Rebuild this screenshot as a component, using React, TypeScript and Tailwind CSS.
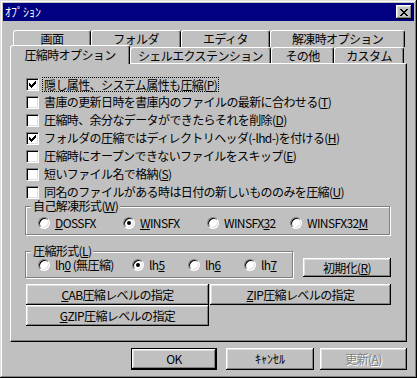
import React from "react";

const raised =
  "bg-[#c0c0c0] shadow-[inset_-1px_-1px_0_#000,inset_1px_1px_0_#fff,inset_-2px_-2px_0_#808080,inset_2px_2px_0_#dfdfdf]";

const U = ({ children }: { children: React.ReactNode }) => (
  <span className="underline underline-offset-[1px] decoration-1">{children}</span>
);

const CheckMark = () => (
  <svg width="7" height="7" viewBox="0 0 7 7" shapeRendering="crispEdges">
    <rect x="6" y="0" width="1" height="1" fill="#000" />
    <rect x="5" y="1" width="2" height="1" fill="#000" />
    <rect x="0" y="2" width="1" height="1" fill="#000" />
    <rect x="4" y="2" width="3" height="1" fill="#000" />
    <rect x="0" y="3" width="2" height="1" fill="#000" />
    <rect x="3" y="3" width="3" height="1" fill="#000" />
    <rect x="0" y="4" width="5" height="1" fill="#000" />
    <rect x="1" y="5" width="3" height="1" fill="#000" />
    <rect x="2" y="6" width="1" height="1" fill="#000" />
  </svg>
);

interface CheckRowProps {
  label: string;
  mn: string;
  checked?: boolean;
  focus?: boolean;
}

const CheckRow = ({ label, mn, checked, focus }: CheckRowProps) => (
  <div className="flex items-center h-[18px] ml-[1px]">
    <div className="w-[13px] h-[13px] shrink-0 bg-white border border-t-[#808080] border-l-[#808080] border-b-white border-r-white shadow-[inset_1px_1px_0_#000,inset_-1px_-1px_0_#dfdfdf] flex items-center justify-center">
      {checked && <CheckMark />}
    </div>
    <span
      className={
        focus
          ? "ml-[4px] px-[1px] leading-[13px] outline-1 outline-dotted outline-black whitespace-nowrap"
          : "ml-[5px] whitespace-nowrap"
      }
    >
      {label}(<U>{mn}</U>)
    </span>
  </div>
);

const Radio = ({ checked, children, className }: { checked?: boolean; children: React.ReactNode; className?: string }) => (
  <div className={"flex items-center gap-[5px] " + (className ?? "")}>
    <div className="w-[12px] h-[12px] shrink-0 rounded-full bg-white border border-t-[#808080] border-l-[#808080] border-b-white border-r-white shadow-[inset_1px_1px_0_#000,inset_-1px_-1px_0_#dfdfdf] flex items-center justify-center">
      {checked && <div className="w-[4px] h-[4px] rounded-full bg-black" />}
    </div>
    <span className="whitespace-nowrap leading-[12px]">{children}</span>
  </div>
);

const Tab = ({ label, className, selected }: { label: string; className: string; selected?: boolean }) => (
  <div
    className={
      "flex items-center justify-center bg-[#c0c0c0] border-t border-l border-r border-t-white border-l-white border-r-black rounded-t-[3px] shadow-[inset_-1px_0_0_#808080] whitespace-nowrap " +
      className +
      (selected ? " relative z-10 h-[19px] -mt-[2px] -mb-[1px] pb-[1px]" : "")
    }
  >
    {label}
  </div>
);

const checks: CheckRowProps[] = [
  { label: "隠し属性、システム属性も圧縮", mn: "P", checked: true, focus: true },
  { label: "書庫の更新日時を書庫内のファイルの最新に合わせる", mn: "T" },
  { label: "圧縮時、余分なデータができたらそれを削除", mn: "D" },
  { label: "フォルダの圧縮ではディレクトリヘッダ(-lhd-)を付ける", mn: "H", checked: true },
  { label: "圧縮時にオープンできないファイルをスキップ", mn: "E" },
  { label: "短いファイル名で格納", mn: "S" },
  { label: "同名のファイルがある時は日付の新しいもののみを圧縮", mn: "U" },
];

const groupBox =
  "border border-[#808080] shadow-[1px_1px_0_#fff,inset_1px_1px_0_#fff] p-0 m-0";

export default function App() {
  return (
    <div className="w-[417px] h-[378px] bg-[#c0c0c0] p-[3px] flex flex-col text-[12px] leading-[14px] tracking-[-0.6px] text-black font-['Noto_Sans_CJK_JP','Noto_Sans',sans-serif] shadow-[inset_-1px_-1px_0_#000,inset_1px_1px_0_#dfdfdf,inset_-2px_-2px_0_#808080,inset_2px_2px_0_#fff] overflow-hidden">
      {/* title bar */}
      <div className="h-[18px] bg-[#000080] flex items-center justify-between pl-[2px] pr-[2px]">
        <span className="text-white tracking-normal">ｵﾌﾟｼｮﾝ</span>
        <div className={"w-[16px] h-[14px] flex items-center justify-center " + raised}>
          <svg width="8" height="7" viewBox="0 0 8 7" shapeRendering="crispEdges">
            <path d="M0 0h2v1h1v1h2v-1h1v-1h2v1h-1v1h-1v1h-1v1h1v1h1v1h1v1h-2v-1h-1v-1h-2v1h-1v1h-2v-1h1v-1h1v-1h1v-1h-1v-1h-1v-1h-1z" fill="#000" />
          </svg>
        </div>
      </div>

      <div className="pl-[7px] pt-[9px] flex flex-col">
        {/* back row of tabs */}
        <div className="flex h-[17px] pl-[3px]">
          <Tab label="画面" className="w-[78px]" />
          <Tab label="フォルダ" className="w-[90px]" />
          <Tab label="エディタ" className="w-[89px]" />
          <Tab label="解凍時オプション" className="w-[135px]" />
        </div>
        {/* front row of tabs */}
        <div className="flex h-[16px] items-end">
          <Tab label="圧縮時オプション" className="w-[120px]" selected />
          <Tab label="シェルエクステンション" className="w-[141px] h-[16px]" />
          <Tab label="その他" className="w-[63px] h-[16px]" />
          <Tab label="カスタム" className="w-[70px] h-[16px]" />
        </div>

        {/* tab panel */}
        <div className="w-[397px] h-[279px] border border-t-white border-l-white border-r-black border-b-black shadow-[inset_-1px_-1px_0_#808080] pl-[14px] pt-[11px] flex flex-col">
          <div className="flex flex-col">
            {checks.map((c) => (
              <CheckRow key={c.mn} {...c} />
            ))}
          </div>

          <fieldset className={"-mt-[1px] w-[365px] " + groupBox}>
            <legend className="ml-[5px] px-[2px] leading-[12px] bg-[#c0c0c0]">
              自己解凍形式(<U>W</U>)
            </legend>
            <div className="flex items-center h-[14px] mt-[4px] mb-[4px] pl-[12px]">
              <Radio className="w-[85px]">
                <U>D</U>OSSFX
              </Radio>
              <Radio className="w-[84px]" checked>
                <U>W</U>INSFX
              </Radio>
              <Radio className="w-[83px]">
                WINSFX<U>3</U>2
              </Radio>
              <Radio>
                WINSFX32<U>M</U>
              </Radio>
            </div>
          </fieldset>

          <div className="flex items-end mt-[10px]">
            <fieldset className={"w-[268px] " + groupBox}>
              <legend className="ml-[5px] px-[2px] leading-[12px] bg-[#c0c0c0]">
                圧縮形式(<U>L</U>)
              </legend>
              <div className="flex items-center h-[14px] mt-[1px] mb-[5px] pl-[12px]">
                <Radio className="w-[94px]">
                  lh<U>0</U> (無圧縮)
                </Radio>
                <Radio className="w-[56px]" checked>
                  lh<U>5</U>
                </Radio>
                <Radio className="w-[56px]">
                  lh<U>6</U>
                </Radio>
                <Radio>
                  lh<U>7</U>
                </Radio>
              </div>
            </fieldset>
            <div className={"ml-[10px] mb-[1px] w-[88px] h-[19px] flex items-center justify-center " + raised}>
              初期化(<U>R</U>)
            </div>
          </div>

          <div className="flex mt-[6px] ml-[1px]">
            <div className={"w-[183px] h-[21px] flex items-center justify-center " + raised}>
              <U>C</U>AB圧縮レベルの指定
            </div>
            <div className={"ml-[1px] w-[181px] h-[21px] flex items-center justify-center " + raised}>
              <U>Z</U>IP圧縮レベルの指定
            </div>
          </div>
          <div className={"ml-[1px] w-[183px] h-[21px] flex items-center justify-center " + raised}>
            <U>G</U>ZIP圧縮レベルの指定
          </div>
        </div>

        {/* dialog buttons */}
        <div className="flex mt-[6px] pl-[121px] h-[22px]">
          <div className="w-[86px] h-[22px] border border-black">
            <div className={"w-full h-full flex items-center justify-center " + raised}>OK</div>
          </div>
          <div className={"ml-[9px] w-[88px] h-[22px] flex items-center justify-center tracking-normal " + raised}>
            ｷｬﾝｾﾙ
          </div>
          <div className={"ml-[6px] w-[87px] h-[22px] flex items-center justify-center text-[#808080] [text-shadow:1px_1px_0_#fff] " + raised}>
            更新(<U>A</U>)
          </div>
        </div>
      </div>
    </div>
  );
}
